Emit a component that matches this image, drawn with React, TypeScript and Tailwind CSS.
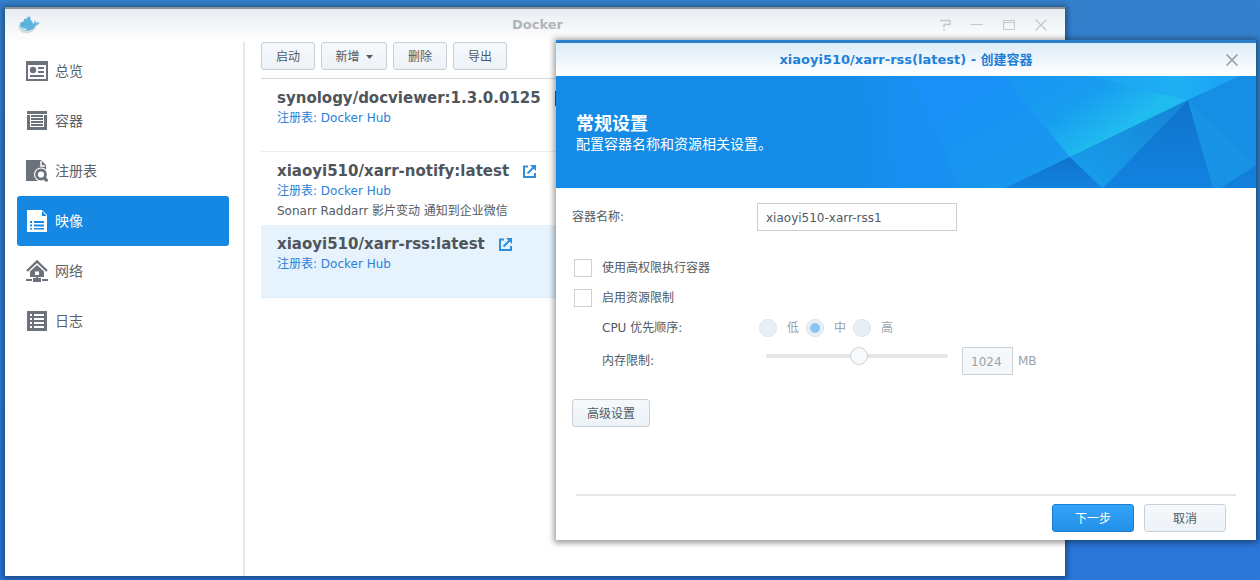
import type { ReactNode } from "react";

const button =
  "flex h-7 items-center justify-center rounded-[3px] border border-[#c8d0d6] bg-linear-to-b from-[#f6f9fc] to-[#ecf2f7] pt-0.5 text-xs text-[#505a64]";

function OverviewIcon() {
  return (
    <svg width="22" height="22" viewBox="0 0 22 22" fill="#6b727c" aria-hidden="true">
      <path fillRule="evenodd" d="M0 1h22v20H0zM2 5v14h18V5z" />
      <circle cx="7" cy="10" r="3.2" />
      <path d="M12 7h6v2h-6zM12 11h6v2h-6zM4 15h14v2H4z" />
    </svg>
  );
}

function ContainerIcon() {
  return (
    <svg width="22" height="22" viewBox="0 0 22 22" fill="#6b727c" aria-hidden="true">
      <path d="M1 1h20v3H1zM1 5h3v12H1zM18 5h3v12h-3zM1 17h20v3H1zM5 5h12v2H5zM5 8h12v2H5zM5 11h12v2H5zM5 14h12v2H5z" />
    </svg>
  );
}

function RegistryIcon() {
  return (
    <svg width="22" height="22" viewBox="0 0 22 22" aria-hidden="true">
      <path d="M0 0h15l5 5v16H0z" fill="#6b727c" />
      <path d="M15 1v5h4" fill="none" stroke="#fff" strokeWidth="1.5" />
      <circle cx="15" cy="14.5" r="7" fill="#fff" />
      <circle cx="15" cy="14.5" r="4.5" fill="none" stroke="#6b727c" strokeWidth="2.8" />
      <path d="M18 17.5l3.5 3.7" stroke="#6b727c" strokeWidth="3" />
    </svg>
  );
}

function ImageIcon() {
  return (
    <svg width="22" height="22" viewBox="0 0 22 22" aria-hidden="true">
      <path d="M1 0h15l5 5v17H1z" fill="#fff" />
      <path d="M16 1v5h4.5z" fill="#1588e4" />
      <path d="M4 11h2v2H4zM8 11h10v2H8zM4 14.500h2v2H4zM8 14.500h10v2H8zM4 18h2v1.500H4zM8 18h10v1.500H8z" fill="#1588e4" />
    </svg>
  );
}

function NetworkIcon() {
  return (
    <svg width="22" height="22" viewBox="0 0 22 22" fill="#6b727c" aria-hidden="true">
      <path d="M1 11L11 1.500L21 11" fill="none" stroke="#6b727c" strokeWidth="2.400" />
      <path fillRule="evenodd" d="M11 5l7 6.500V17H4v-5.500zM9 11.500V15h4v-3.500z" />
      <path d="M10 16h2v2h-2zM0 19h6v2H0zM7 18h8v4H7zM16 19h6v2h-6z" />
    </svg>
  );
}

function LogIcon() {
  return (
    <svg width="22" height="22" viewBox="0 0 22 22" aria-hidden="true">
      <path d="M1 1h20v20H1z" fill="#6b727c" />
      <path d="M4 4h2v2H4zM8 4h10v2H8zM4 8h2v2H4zM8 8h10v2H8zM4 12h2v2H4zM8 12h10v2H8zM4 16h2v2H4zM8 16h10v2H8z" fill="#fff" />
    </svg>
  );
}

function WhaleIcon() {
  return (
    <svg width="22" height="18" viewBox="0 0 24 18" aria-hidden="true">
      <path d="M1 9q1 8 8 8 8 0 10.500-8 2.500 0 3.500-3" fill="none" stroke="#d3d8dd" strokeWidth="2" />
      <path d="M2 8.500L3 6l3-.5.500-3L10 2l.5-2h3v3l2 2.500L17 8q1.500-1 .5-4 2 .5 2.500 2.500 1.500-.5 3 0-1 2.500-3.500 2.500Q17 15.500 9 15.500 3 15 2 8.500z" fill="#5fb4dc" />
      <path d="M4 8h10" stroke="#4ba0cd" strokeWidth=".7" />
      <path d="M4 11.500q3 2 6 1.500-1 2-3 1.500-2-.5-3-3z" fill="#d8edf7" />
    </svg>
  );
}

function LinkIcon() {
  return (
    <svg width="13" height="13" viewBox="0 0 13 13" fill="none" stroke="#2f8fdc" strokeWidth="2" aria-hidden="true">
      <path d="M5 1.500H1V12h11V8M4.500 8.500l6.500-6.500" />
      <path d="M7 0h6v6z" fill="#2f8fdc" stroke="none" />
    </svg>
  );
}

const navigation: { label: string; icon: ReactNode; active?: boolean }[] = [
  { label: "总览", icon: <OverviewIcon /> },
  { label: "容器", icon: <ContainerIcon /> },
  { label: "注册表", icon: <RegistryIcon /> },
  { label: "映像", icon: <ImageIcon />, active: true },
  { label: "网络", icon: <NetworkIcon /> },
  { label: "日志", icon: <LogIcon /> },
];

const images = [
  { name: "synology/docviewer:1.3.0.0125", note: "", state: "plain", link: false },
  { name: "xiaoyi510/xarr-notify:latest", note: "Sonarr Raddarr 影片变动 通知到企业微信", state: "plain", link: true },
  { name: "xiaoyi510/xarr-rss:latest", note: "", state: "selected", link: true },
];

function WindowControls() {
  const control = "flex size-8 items-center justify-center";
  return (
    <div className="flex">
      <button className={control} aria-label="帮助">
        <svg width="12" height="12" viewBox="0 0 12 12" fill="none" stroke="#c3c7cb" strokeWidth="1.3" aria-hidden="true">
          <path d="M1 1.500h10v4H5v3M5 10v2" />
        </svg>
      </button>
      <button className={control} aria-label="最小化">
        <svg width="12" height="12" viewBox="0 0 12 12" stroke="#c3c7cb" aria-hidden="true"><path d="M0 5.500h12" /></svg>
      </button>
      <button className={control} aria-label="最大化">
        <svg width="12" height="12" viewBox="0 0 12 12" fill="none" stroke="#c3c7cb" aria-hidden="true">
          <path d="M.5 1.500h11v9H.5zM.5 3.500h11" />
        </svg>
      </button>
      <button className={control} aria-label="关闭">
        <svg width="12" height="12" viewBox="0 0 12 12" stroke="#c3c7cb" strokeWidth="1.3" aria-hidden="true"><path d="M.5.5l11 11M11.500.5l-11 11" /></svg>
      </button>
    </div>
  );
}

function DockerWindow() {
  return (
    <section className="absolute top-[7px] bottom-1 left-[5px] right-[195px] flex flex-col border-t-2 border-[#8f9296] bg-linear-to-b from-[#e8edf2] to-white to-[34px] shadow-[0_1px_6px_2px_rgba(0,0,0,0.4)]">
      <header className="grid h-8 grid-cols-[1fr_auto_1fr] items-center pr-2 pl-[13px]">
        <WhaleIcon />
        <h1 className="text-[13px] font-bold text-[#b0b5ba]">Docker</h1>
        <div className="flex justify-end"><WindowControls /></div>
      </header>
      <div className="flex min-h-0 flex-1 pt-px">
        <nav className="w-60 shrink-0 border-r-2 border-[#e6e9eb] pt-1 pr-[14px] pl-3">
          {navigation.map((item) => (
            <a
              key={item.label}
              href="#"
              className={
                item.active
                  ? "flex h-[50px] items-center gap-[7px] rounded-[3px] bg-[#1588e4] px-[9px] text-sm text-white"
                  : "flex h-[50px] items-center gap-[7px] px-[9px] text-sm text-[#5a626b]"
              }
            >
              {item.icon}
              {item.label}
            </a>
          ))}
        </nav>
        <main className="flex-1 pl-4">
          <div className="flex gap-1.5 border-b border-[#d3d8dc] pb-2">
            <button className={`${button} w-[54px]`}>启动</button>
            <button className={`${button} w-[66px] gap-1.5`}>
              新增
              <svg width="7" height="4" viewBox="0 0 7 4" fill="#505a64" aria-hidden="true"><path d="M0 0h7L3.500 4z" /></svg>
            </button>
            <button className={`${button} w-[54px]`}>删除</button>
            <button className={`${button} w-[54px]`}>导出</button>
          </div>
          <ul>
            {images.map((image) => (
              <li
                key={image.name}
                className={
                  image.state === "selected"
                    ? "h-[73px] border-b border-[#dfeaf2] bg-[#e6f3fd] px-4 pt-[9px] text-xs leading-5"
                    : "h-[73px] border-b border-[#eceff1] px-4 pt-[9px] text-xs leading-5 nth-2:border-transparent"
                }
              >
                <h2 className="flex items-center text-[15px] leading-5 font-bold text-[#4f555b]">
                  {image.name}
                  {image.link ? (
                    <a href="#" aria-label="打开链接" className="ml-[14px]"><LinkIcon /></a>
                  ) : (
                    <span className="ml-[14px] h-[15px] w-1 bg-[#4f555b]" />
                  )}
                </h2>
                <p><a href="#" className="text-[#2b81d8]">注册表: Docker Hub</a></p>
                {image.note && <p className="text-[#555b61]">{image.note}</p>}
              </li>
            ))}
          </ul>
        </main>
      </div>
    </section>
  );
}

function BannerArt() {
  return (
    <svg className="absolute inset-0 size-full" viewBox="0 0 700 112" preserveAspectRatio="xMaxYMid slice" aria-hidden="true">
      <defs>
        <linearGradient id="base" x1="0" x2="1"><stop offset="0" stopColor="#158be8" /><stop offset=".42" stopColor="#158be8" /><stop offset=".52" stopColor="#1790f4" /><stop offset="1" stopColor="#1a98f0" /></linearGradient>
        <linearGradient id="bright" gradientUnits="userSpaceOnUse" x1="470" y1="0" x2="525" y2="82"><stop offset="0" stopColor="#1896f4" /><stop offset=".5" stopColor="#189df0" /><stop offset="1" stopColor="#20bcef" /></linearGradient>
        <linearGradient id="side" gradientUnits="userSpaceOnUse" x1="430" y1="0" x2="490" y2="112"><stop offset="0" stopColor="#1890f8" /><stop offset="1" stopColor="#1899ec" /></linearGradient>
        <linearGradient id="deep" x1="0" y1="0" x2="0" y2="1"><stop offset="0" stopColor="#0f72cb" /><stop offset="1" stopColor="#1283e0" /></linearGradient>
        <linearGradient id="strip" x1="1" y1="0" x2="0" y2="1"><stop offset="0" stopColor="#1684d4" /><stop offset="1" stopColor="#17a0ee" /></linearGradient>
        <linearGradient id="top" x1="0" x2="1"><stop offset="0" stopColor="#1aa3f2" /><stop offset=".6" stopColor="#1fb0f4" /><stop offset="1" stopColor="#1b9ff8" /></linearGradient>
      </defs>
      <path d="M0 0h700v112H0z" fill="url(#base)" />
      <path d="M354 0h93l67 81-65 31h-46z" fill="url(#side)" />
      <path d="M354 0l50 112h-60l-40-112z" fill="#1790f0" opacity=".5" />
      <path d="M447 0h87l98 24-118 57z" fill="url(#bright)" />
      <path d="M534 0h150l-52 24z" fill="url(#top)" />
      <path d="M449 112l65-31 32 31z" fill="url(#deep)" />
      <path d="M514 81L632 24l-85 88z" fill="url(#strip)" />
      <path d="M632 24l25 88H547z" fill="url(#deep)" />
      <path d="M632 24l68 65-35 23h-8z" fill="#1892e4" />
      <path d="M632 24l52-24h16v89z" fill="#158ee4" />
      <path d="M665 112l35-23v23z" fill="#1280da" />
    </svg>
  );
}

function CreateContainerDialog() {
  const row = "flex items-center";
  const radio =
    "mr-2.5 flex size-[18px] appearance-none items-center justify-center rounded-full border border-[#dbe1e6] bg-[#e9eff4] before:hidden before:size-2.5 before:rounded-full before:bg-[#8ac4f2] checked:before:block";
  const checkbox = "mr-2.5 size-[18px] appearance-none border border-[#ccd2d7] bg-white";
  return (
    <section
      role="dialog"
      aria-labelledby="dialog-title"
      className="absolute top-10 right-1 left-[556px] border-t-[3px] border-[#2a80ca] bg-white text-xs text-[#505a64] shadow-[0_1px_6px_2px_rgba(0,0,0,0.4)]"
    >
      <header className="grid h-[33px] grid-cols-[1fr_auto_1fr] items-center bg-linear-to-b from-[#dcecf8] to-white">
        <h2 id="dialog-title" className="col-start-2 text-[13px] font-bold text-[#1f80d8]">xiaoyi510/xarr-rss(latest) - 创建容器</h2>
        <button aria-label="关闭" className="mr-2 flex size-8 items-center justify-center justify-self-end">
          <svg width="12" height="12" viewBox="0 0 12 12" stroke="#8f9ba7" strokeWidth="1.500" aria-hidden="true"><path d="M.5.5l11 11M11.500.5l-11 11" /></svg>
        </button>
      </header>
      <div className="relative h-28 px-5 pt-9 text-white">
        <BannerArt />
        <div className="relative">
          <h3 className="text-lg leading-6 font-bold">常规设置</h3>
          <p className="text-sm leading-4">配置容器名称和资源相关设置。</p>
        </div>
      </div>
      <form className="px-4 pt-[15px]">
        <div className={row}>
          <label htmlFor="name" className="w-[185px]">容器名称:</label>
          <input id="name" defaultValue="xiaoyi510-xarr-rss1" className="h-7 w-[200px] border border-[#c8d0d6] bg-white px-2 pt-0.5 text-xs" />
        </div>
        <div className="mt-[22px] pl-0.5">
          <label className={`${row} h-[30px]`}><input type="checkbox" className={checkbox} />使用高权限执行容器</label>
          <label className={`${row} h-[30px]`}><input type="checkbox" className={checkbox} />启用资源限制</label>
        </div>
        <fieldset className={`${row} h-[30px] pl-[30px]`}>
          <span className="w-[157px]">CPU 优先顺序:</span>
          <div className="flex gap-[7px] text-[#9aa1a8]">
            <label className={row}><input type="radio" name="priority" disabled className={radio} />低</label>
            <label className={row}><input type="radio" name="priority" disabled defaultChecked className={radio} />中</label>
            <label className={row}><input type="radio" name="priority" disabled className={radio} />高</label>
          </div>
        </fieldset>
        <div className="mt-1 flex h-7 items-start pl-[30px]">
          <label htmlFor="memory" className="w-[164px] leading-7">内存限制:</label>
          <input
            id="memory"
            type="range"
            min="0"
            max="100"
            defaultValue="51"
            disabled
            className="h-[18px] w-[182px] appearance-none bg-transparent [&::-webkit-slider-runnable-track]:h-1 [&::-webkit-slider-runnable-track]:rounded-full [&::-webkit-slider-runnable-track]:bg-[#e3e5e7] [&::-webkit-slider-thumb]:-mt-[7px] [&::-webkit-slider-thumb]:size-[18px] [&::-webkit-slider-thumb]:appearance-none [&::-webkit-slider-thumb]:rounded-full [&::-webkit-slider-thumb]:border [&::-webkit-slider-thumb]:border-[#cbd1d6] [&::-webkit-slider-thumb]:bg-[#f7fafc]"
          />
          <input aria-label="内存大小" defaultValue="1024" disabled className="mr-[5px] ml-3.5 h-7 w-[51px] border border-[#ccd2d7] bg-[#f5f8fa] px-2 pt-0.5 text-xs text-[#9aa1a8]" />
          <span className="leading-7 text-[#9aa1a8]">MB</span>
        </div>
        <button type="button" className={`${button} mt-6 w-[78px]`}>高级设置</button>
        <footer className="mx-1 mt-[67px] flex justify-end gap-2.5 border-t-2 border-[#e5e7e9] px-2.5 pt-2 pb-2">
          <button type="button" className="h-7 w-[82px] rounded-[3px] border border-[#1a7fd2] bg-linear-to-b from-[#35a3f8] to-[#2190e8] pt-0.5 text-xs text-white">下一步</button>
          <button type="button" className={`${button} w-[82px]`}>取消</button>
        </footer>
      </form>
    </section>
  );
}

export default function App() {
  return (
    <div className="relative h-screen min-h-[560px] overflow-hidden bg-linear-to-b from-[#3480cc] to-[#2a76da] font-['DejaVu_Sans','Noto_Sans_CJK_SC',sans-serif]">
      <DockerWindow />
      <CreateContainerDialog />
    </div>
  );
}
